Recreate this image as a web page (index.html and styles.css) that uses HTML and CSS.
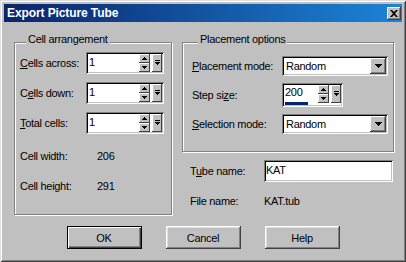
FILE: index.html
```html
<!DOCTYPE html>
<html lang="en">
<head>
    <meta charset="UTF-8">
    <title>Export Picture Tube</title>
    <link rel="stylesheet" href="styles.css">
</head>
<body>
    <div class="window">
        <div class="titlebar">
            <span class="title">Export Picture Tube</span>
            <button class="close-btn">
                <svg width="8" height="7" viewBox="0 0 8 7"><path d="M0 0h2l2 2 2-2h2L5 3.5 8 7H6L4 5 2 7H0l3-3.5z"/></svg>
            </button>
        </div>

        <div class="dialog">
            <div class="columns">
                <div class="group group-cells">
                    <div class="group-title">Cell arrangement</div>

                    <div class="row">
                        <span class="label"><u>C</u>ells across:</span>
                        <div class="spin">
                            <span class="spin-value">1</span>
                            <span class="spin-arrows">
                                <span class="arrow-btn"><svg width="5" height="3"><path d="M2 0h1v1h1v1h1v1H0V2h1V1h1z"/></svg></span>
                                <span class="arrow-btn"><svg width="5" height="3"><path d="M0 0h5v1H4v1H3v1H2V2H1V1H0z"/></svg></span>
                            </span>
                            <span class="spin-drop"><svg width="5" height="6"><path d="M0 0h5v1H0z M0 2h5v1H4v1H3v1H2V4H1V3H0z"/></svg></span>
                        </div>
                    </div>

                    <div class="row">
                        <span class="label">C<u>e</u>lls down:</span>
                        <div class="spin">
                            <span class="spin-value">1</span>
                            <span class="spin-arrows">
                                <span class="arrow-btn"><svg width="5" height="3"><path d="M2 0h1v1h1v1h1v1H0V2h1V1h1z"/></svg></span>
                                <span class="arrow-btn"><svg width="5" height="3"><path d="M0 0h5v1H4v1H3v1H2V2H1V1H0z"/></svg></span>
                            </span>
                            <span class="spin-drop"><svg width="5" height="6"><path d="M0 0h5v1H0z M0 2h5v1H4v1H3v1H2V4H1V3H0z"/></svg></span>
                        </div>
                    </div>

                    <div class="row">
                        <span class="label"><u>T</u>otal cells:</span>
                        <div class="spin">
                            <span class="spin-value">1</span>
                            <span class="spin-arrows">
                                <span class="arrow-btn"><svg width="5" height="3"><path d="M2 0h1v1h1v1h1v1H0V2h1V1h1z"/></svg></span>
                                <span class="arrow-btn"><svg width="5" height="3"><path d="M0 0h5v1H4v1H3v1H2V2H1V1H0z"/></svg></span>
                            </span>
                            <span class="spin-drop"><svg width="5" height="6"><path d="M0 0h5v1H0z M0 2h5v1H4v1H3v1H2V4H1V3H0z"/></svg></span>
                        </div>
                    </div>

                    <div class="info info-first">
                        <span class="info-label">Cell width:</span>
                        <span>206</span>
                    </div>
                    <div class="info">
                        <span class="info-label">Cell height:</span>
                        <span>291</span>
                    </div>
                </div>

                <div class="right-col">
                    <div class="group group-placement">
                        <div class="group-title">Placement options</div>

                        <div class="row">
                            <span class="label"><u>P</u>lacement mode:</span>
                            <div class="combo">
                                <span class="combo-value">Random</span>
                                <span class="combo-drop"><svg width="7" height="4"><path d="M0 0h7v1H6v1H5v1H4v1H3V3H2V2H1V1H0z"/></svg></span>
                            </div>
                        </div>

                        <div class="row">
                            <span class="label">Step si<u>z</u>e:</span>
                            <div class="spin spin-step">
                                <span class="spin-value">
                                    200
                                    <span class="step-bar"></span>
                                </span>
                                <span class="spin-arrows">
                                    <span class="arrow-btn"><svg width="5" height="3"><path d="M2 0h1v1h1v1h1v1H0V2h1V1h1z"/></svg></span>
                                    <span class="arrow-btn"><svg width="5" height="3"><path d="M0 0h5v1H4v1H3v1H2V2H1V1H0z"/></svg></span>
                                </span>
                                <span class="spin-drop"><svg width="5" height="6"><path d="M0 0h5v1H0z M0 2h5v1H4v1H3v1H2V4H1V3H0z"/></svg></span>
                            </div>
                        </div>

                        <div class="row">
                            <span class="label"><u>S</u>election mode:</span>
                            <div class="combo">
                                <span class="combo-value">Random</span>
                                <span class="combo-drop"><svg width="7" height="4"><path d="M0 0h7v1H6v1H5v1H4v1H3V3H2V2H1V1H0z"/></svg></span>
                            </div>
                        </div>
                    </div>

                    <div class="field-row">
                        <span class="field-label">T<u>u</u>be name:</span>
                        <div class="edit">KAT</div>
                    </div>
                    <div class="file-row">
                        <span class="field-label">File name:</span>
                        <span>KAT.tub</span>
                    </div>
                </div>
            </div>

            <div class="buttons">
                <button class="btn btn-default">OK</button>
                <button class="btn">Cancel</button>
                <button class="btn">Help</button>
            </div>
        </div>
    </div>
</body>
</html>
```

FILE: styles.css
```css
* {
    box-sizing: border-box;
}

body {
    margin: 0;
    background: #c0c0c0;
    font-family: "Liberation Sans", Arial, sans-serif;
    font-size: 11px;
    letter-spacing: -0.3px;
    color: #000;
}

.window {
    width: 406px;
    height: 262px;
    padding: 4px;
    background: #c0c0c0;
    box-shadow: inset 1px 1px #dfdfdf, inset -1px -1px #404040, inset 2px 2px #fff, inset -2px -2px #808080;
}

.titlebar {
    height: 18px;
    display: flex;
    align-items: center;
    justify-content: space-between;
    padding: 0 1px 0 3px;
    background: linear-gradient(to right, #0a246a, #1c84d8);
    color: #fff;
    font-size: 12px;
    font-weight: bold;
    letter-spacing: -0.1px;
}

.close-btn {
    width: 14px;
    height: 13px;
    padding: 0;
    border: none;
    background: #c0c0c0;
    display: flex;
    align-items: center;
    justify-content: center;
    box-shadow: inset -1px -1px #404040, inset 1px 1px #fff, inset -2px -2px #808080;
}

.dialog {
    padding-top: 20px;
}

.columns {
    display: flex;
    margin-left: 10px;
}

/* etched group box */
.group {
    border: 1px solid #808080;
    box-shadow: inset 1px 1px #fff, 1px 1px #fff;
}

.group-title {
    display: table;
    margin: -10px 0 6px 6px;
    padding: 0 2px;
    line-height: 13px;
    background: #c0c0c0;
}

.group-cells {
    width: 158px;
    height: 173px;
    padding-left: 5px;
}

.group-cells .label {
    width: 66px;
}

.row {
    display: flex;
    align-items: center;
}

.row + .row {
    margin-top: 8px;
}

.label {
    line-height: 13px;
}

/* spinner field */
.spin {
    width: 78px;
    height: 22px;
    padding: 2px;
    display: flex;
    background: #fff;
    box-shadow: inset 1px 1px #808080, inset -1px -1px #fff, inset 2px 2px #000, inset -2px -2px #c0c0c0;
}

.spin-value {
    flex: 1;
    padding: 1px 0 0 1px;
    line-height: 14px;
}

.spin-arrows {
    display: flex;
    flex-direction: column;
    margin-right: 2px;
}

.arrow-btn {
    width: 11px;
    height: 9px;
    display: flex;
    align-items: center;
    justify-content: center;
    background: #c0c0c0;
    box-shadow: inset -1px -1px #404040, inset 1px 1px #fff;
}

.spin-drop {
    width: 10px;
    height: 18px;
    display: flex;
    align-items: center;
    justify-content: center;
    background: #c0c0c0;
    box-shadow: inset -1px -1px #404040, inset 1px 1px #fff;
}

.spin-step {
    width: 61px;
    height: 24px;
    align-items: flex-start;
}

.spin-step .spin-value {
    line-height: 13px;
}

.step-bar {
    display: block;
    width: 23px;
    height: 3px;
    margin-top: 3px;
    background: #0a246a;
}

.info {
    display: flex;
    line-height: 13px;
    margin-top: 17px;
}

.info-first {
    margin-top: 16px;
}

.info-label {
    width: 77px;
}

.right-col {
    margin-left: 10px;
    width: 212px;
}

.group-placement {
    height: 110px;
    padding-left: 9px;
}

.group-placement .group-title {
    margin-bottom: 10px;
}

.group-placement .label {
    width: 90px;
}

.group-placement .row + .row {
    margin-top: 7px;
}

/* drop-down list */
.combo {
    width: 106px;
    height: 20px;
    padding: 2px;
    display: flex;
    align-items: center;
    background: #fff;
    box-shadow: inset 1px 1px #808080, inset -1px -1px #fff, inset 2px 2px #000, inset -2px -2px #c0c0c0;
}

.combo-value {
    flex: 1;
    padding-left: 2px;
}

.combo-drop {
    width: 16px;
    height: 16px;
    display: flex;
    align-items: center;
    justify-content: center;
    background: #c0c0c0;
    box-shadow: inset -1px -1px #404040, inset 1px 1px #fff, inset -2px -2px #808080;
}

.field-row {
    display: flex;
    align-items: center;
    margin-top: 8px;
    padding-left: 8px;
}

.field-label {
    width: 74px;
    line-height: 13px;
}

.edit {
    width: 129px;
    height: 22px;
    padding: 3px 2px 0;
    line-height: 14px;
    background: #fff;
    box-shadow: inset 1px 1px #808080, inset -1px -1px #fff, inset 2px 2px #000, inset -2px -2px #c0c0c0;
}

.file-row {
    display: flex;
    line-height: 13px;
    margin-top: 13px;
    padding-left: 8px;
}

.buttons {
    display: flex;
    justify-content: center;
    gap: 24px;
    margin-top: 11px;
}

.btn {
    width: 75px;
    height: 23px;
    padding: 0;
    border: none;
    background: #c0c0c0;
    font-family: inherit;
    font-size: 11px;
    letter-spacing: -0.3px;
    color: #000;
    box-shadow: inset -1px -1px #404040, inset 1px 1px #fff, inset -2px -2px #808080, inset 2px 2px #dfdfdf;
}

.btn-default {
    box-shadow: inset 0 0 0 1px #000, inset 2px 2px #fff, inset -2px -2px #404040, inset -3px -3px #808080;
}
```
